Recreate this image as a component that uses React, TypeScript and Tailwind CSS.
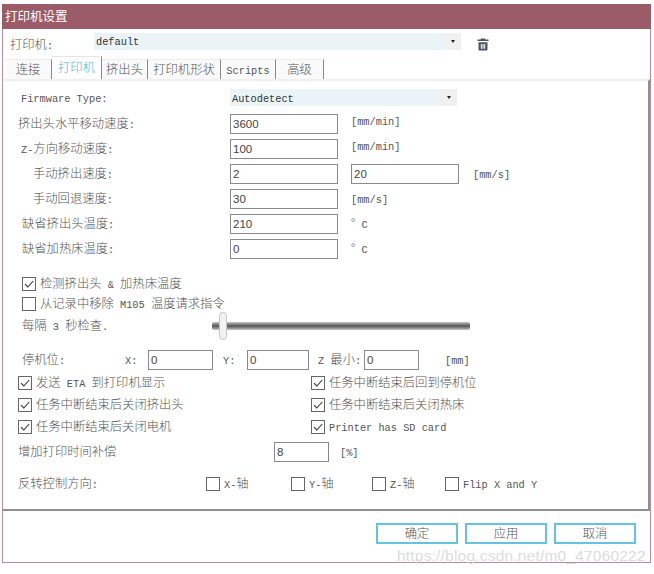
import React from "react";

const FONT = "font-['Liberation_Mono','Noto_Sans_CJK_SC',monospace]";

function T({ s, className = "" }: { s: string; className?: string }) {
  const parts = s.match(/[\x20-\x7e]+|[^\x20-\x7e]+/g) || [];
  return (
    <span className={"whitespace-pre text-[#555] " + className}>
      {parts.map((p, i) =>
        /^[\x20-\x7e]/.test(p) ? (
          <span key={i} className="font-['Liberation_Mono',monospace] text-[10.3px]">{p}</span>
        ) : (
          <span key={i} className="font-['Noto_Sans_CJK_SC',sans-serif] text-[12.3px] font-light">{p}</span>
        )
      )}
    </span>
  );
}

function Input({ value, className = "" }: { value: string; className?: string }) {
  return (
    <input
      readOnly
      defaultValue={value}
      className={"h-[20px] border border-[#8a8a8a] bg-white px-[2px] font-['Liberation_Sans',sans-serif] text-[11.5px] text-[#444] outline-none " + className}
    />
  );
}

function Box({ checked = false }: { checked?: boolean }) {
  return (
    <span className="flex h-[14px] w-[14px] shrink-0 items-center justify-center border border-[#666] bg-white">
      {checked && (
        <svg width="12" height="12" viewBox="0 0 12 12" fill="none">
          <path d="M2 6.2 L4.8 9 L10.2 3" stroke="#333" strokeWidth="1.1" />
        </svg>
      )}
    </span>
  );
}

function Check({ label, checked = false, className = "" }: { label: string; checked?: boolean; className?: string }) {
  return (
    <div className={"flex items-center gap-[4px] " + className}>
      <Box checked={checked} />
      <T s={label} />
    </div>
  );
}

function Select({ value, className }: { value: string; className: string }) {
  return (
    <div className={"flex items-center bg-[#eaf4f7] " + className}>
      <span className="flex-1 pl-[2px]"><T s={value} className="[&_span]:text-[#333]" /></span>
      <span className="flex h-full w-[17px] items-center justify-center bg-[#f0f0f0]">
        <span className="h-0 w-0 border-x-[2.5px] border-t-[3px] border-x-transparent border-t-[#222]" />
      </span>
    </div>
  );
}

function Tab({ label, className, active = false }: { label: string; className: string; active?: boolean }) {
  return (
    <div
      className={
        "flex items-center justify-center border-r border-r-[#888] " +
        (active ? "-mt-[2px] h-[23px] bg-white border-t border-t-[#e5e5e5] " : "h-[20px] bg-[#fafafa] border-t border-t-[#eee] ") +
        className
      }
    >
      <T s={label} className={active ? "[&_span]:text-[#45b8d8]" : ""} />
    </div>
  );
}

function Row({ label, labelClass, h, children }: { label: string; labelClass: string; h: string; children?: React.ReactNode }) {
  return (
    <div className={"flex items-center " + h}>
      <div className={labelClass}><T s={label} /></div>
      {children}
    </div>
  );
}

export default function App() {
  return (
    <div className={"relative h-[574px] w-[654px] overflow-hidden bg-white pl-[2px] pt-[4px] " + FONT}>
      <div className="flex h-[559px] w-[649px] flex-col border-x border-b border-[#bb8c98]">
        <div className="-mx-px flex h-[25px] shrink-0 items-center bg-[#9c5b68] pl-[3px] font-['Noto_Sans_CJK_SC',sans-serif] text-[12.5px] text-white">
          打印机设置
        </div>

        <div className="flex h-[29px] shrink-0 items-center pb-[3px] pl-[7px] pt-[4px]">
          <div className="w-[84px] pt-[2px]"><T s="打印机:" /></div>
          <Select value="default" className="mb-[6px] h-[17px] w-[367px]" />
          <svg className="ml-[16px]" width="12" height="13" viewBox="0 0 12 13" fill="#4b5563">
            <path d="M4 0.5h4l.5 1H11.5v1.5H.5V1.5H3.5z" />
            <path d="M1.5 4.2h9v7.3a1 1 0 0 1-1 1h-7a1 1 0 0 1-1-1z" />
            <path d="M3.8 6h1v4.8h-1zM5.5 6h1v4.8h-1zM7.2 6h1v4.8h-1z" fill="#fff" />
          </svg>
        </div>

        <div className="flex h-[21px] shrink-0 items-end pl-[2px]">
          <Tab label="连接" className="w-[47px]" />
          <Tab label="打印机" className="w-[50px]" active />
          <Tab label="挤出头" className="w-[46px]" />
          <Tab label="打印机形状" className="w-[73px]" />
          <Tab label="Scripts" className="w-[55px]" />
          <Tab label="高级" className="w-[48px]" />
        </div>

        <div className="flex h-[432px] shrink-0 flex-col border-b-2 border-r-2 border-t-2 border-b-[#8f8f8f] border-r-[#8f8f8f] border-t-[#f0f0f0] pt-[7px]">
          <Row label="Firmware Type:" labelClass="w-[227px] pl-[18px]" h="h-[19px]">
            <Select value="Autodetect" className="h-[17px] w-[227px]" />
          </Row>
          <div className="h-[4px]" />
          <Row label="挤出头水平移动速度:" labelClass="w-[227px] pl-[15px]" h="h-[25px]">
            <Input value="3600" className="w-[108px]" />
            <div className="ml-[13px] -mt-[6px]"><T s="[mm/min]" /></div>
          </Row>
          <Row label="Z-方向移动速度:" labelClass="w-[227px] pl-[18px]" h="h-[25px]">
            <Input value="100" className="w-[108px]" />
            <div className="ml-[13px] -mt-[6px]"><T s="[mm/min]" /></div>
          </Row>
          <Row label="手动挤出速度:" labelClass="w-[227px] pl-[30px]" h="h-[25px]">
            <Input value="2" className="w-[108px]" />
            <Input value="20" className="ml-[13px] w-[108px]" />
            <div className="ml-[14px]"><T s="[mm/s]" /></div>
          </Row>
          <Row label="手动回退速度:" labelClass="w-[227px] pl-[30px]" h="h-[25px]">
            <Input value="30" className="w-[108px]" />
            <div className="ml-[13px]"><T s="[mm/s]" /></div>
          </Row>
          <Row label="缺省挤出头温度:" labelClass="w-[227px] pl-[19px]" h="h-[25px]">
            <Input value="210" className="w-[108px]" />
            <div className="ml-[13px]"><T s="° C" /></div>
          </Row>
          <Row label="缺省加热床温度:" labelClass="w-[227px] pl-[19px]" h="h-[25px]">
            <Input value="0" className="w-[108px]" />
            <div className="ml-[13px]"><T s="° C" /></div>
          </Row>

          <Check label="检测挤出头 & 加热床温度" checked className="ml-[19px] mt-[13px] h-[20px]" />
          <Check label="从记录中移除 M105 温度请求指令" className="ml-[19px] h-[20px]" />

          <div className="flex h-[24px] items-center pl-[19px]">
            <div className="w-[190px]"><T s="每隔 3 秒检查." /></div>
            <div className="relative h-[8px] w-[258px] rounded-[2px] bg-gradient-to-b from-[#c8c8c8] via-[#555] to-[#c8c8c8]">
              <div className="absolute -top-[10px] left-[7px] h-[28px] w-[8px] rounded-[4px] border border-[#c4c4c4] bg-[#f2f2f2]" />
            </div>
          </div>

          <div className="mt-[12px] flex h-[20px] items-center pl-[19px]">
            <div className="w-[103px]"><T s="停机位:" /></div>
            <div className="w-[23px]"><T s="X:" /></div>
            <Input value="0" className="w-[65px]" />
            <div className="ml-[10px] w-[24px]"><T s="Y:" /></div>
            <Input value="0" className="w-[62px]" />
            <div className="ml-[9px] w-[46px]"><T s="Z 最小:" /></div>
            <Input value="0" className="w-[55px]" />
            <div className="ml-[26px]"><T s="[mm]" /></div>
          </div>

          <div className="mt-[2px] grid grid-cols-[293px_1fr] pl-[15px]">
            <Check label="发送 ETA 到打印机显示" checked className="h-[22px]" />
            <Check label="任务中断结束后回到停机位" checked className="h-[22px]" />
            <Check label="任务中断结束后关闭挤出头" checked className="h-[22px]" />
            <Check label="任务中断结束后关闭热床" checked className="h-[22px]" />
            <Check label="任务中断结束后关闭电机" checked className="h-[22px]" />
            <Check label="Printer has SD card" checked className="h-[22px]" />
          </div>

          <div className="mt-[4px] flex h-[20px] items-center pl-[15px]">
            <div className="w-[256px]"><T s="增加打印时间补偿" /></div>
            <Input value="8" className="w-[55px]" />
            <div className="ml-[11px]"><T s="[%]" /></div>
          </div>

          <div className="mt-[12px] flex h-[20px] items-center pl-[15px]">
            <div className="w-[188px]"><T s="反转控制方向:" /></div>
            <Check label="X-轴" className="w-[85px]" />
            <Check label="Y-轴" className="w-[81px]" />
            <Check label="Z-轴" className="w-[73px]" />
            <Check label="Flip X and Y" />
          </div>
        </div>

        <div className="flex flex-1 items-start justify-end gap-[7px] pr-[14px] pt-[12px]">
          {["确定", "应用", "取消"].map((b) => (
            <button key={b} className="flex h-[21px] w-[82px] items-center justify-center border-2 border-[#62c4e2] bg-white">
              <T s={b} />
            </button>
          ))}
        </div>
      </div>

      <div className="absolute left-[397px] top-[545px] font-['Liberation_Sans',sans-serif] text-[15.5px] leading-[22px] tracking-[0.2px] text-[#dcdcdc]">
        https://blog.csdn.net/m0_47060222
      </div>
    </div>
  );
}
